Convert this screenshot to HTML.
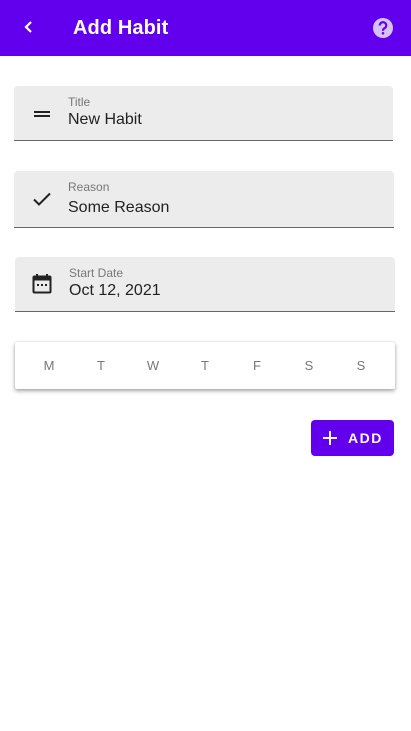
<!DOCTYPE html>
<html><head><style>
body{margin:0;width:411px;height:731px;background:#fff;font-family:"Liberation Sans",sans-serif;position:relative;overflow:hidden}
.hdr{position:absolute;left:0;top:0;width:411px;height:56px;background:#6200ee}
.hdr .t{position:absolute;left:73px;top:17px;color:#fff;font-size:20px;font-weight:bold;letter-spacing:0.1px}
.f{position:absolute;background:#ececec;border-radius:4px 4px 0 0;border-bottom:1px solid #666;height:53px}
.f .l{position:absolute;left:54px;top:9px;font-size:12px;color:#777}
.f .v{position:absolute;left:54px;top:25px;font-size:16px;color:#222}
.f svg{position:absolute;left:16px;top:16px}
.card{position:absolute;left:15px;top:342px;width:380px;height:47px;background:#fff;box-shadow:0 2px 4px rgba(0,0,0,.35),0 0 2px rgba(0,0,0,.12);border-radius:2px}
.card span{position:absolute;top:16px;font-size:13px;color:#777;width:20px;text-align:center}
.btn{position:absolute;left:311px;top:420px;width:83px;height:36px;background:#6200ee;border-radius:4px;color:#fff}
.btn span{position:absolute;left:37px;top:10px;font-size:14px;font-weight:bold;letter-spacing:1.5px}
</style></head><body>
<div class="hdr">
<svg style="position:absolute;left:20px;top:19px" width="16" height="16" viewBox="0 0 16 16"><path d="M11 3L6 8l5 5" stroke="#fff" stroke-width="2.2" fill="none"/></svg>
<div class="t">Add Habit</div>
<svg style="position:absolute;left:372px;top:17px" width="22" height="22" viewBox="0 0 22 22"><circle cx="11" cy="11" r="10" fill="#d6c2f7"/><path d="M7.8 8.5a3.2 3.2 0 1 1 4.6 2.8c-1 .6-1.4 1.1-1.4 2.4" stroke="#6200ee" stroke-width="2.2" fill="none"/><circle cx="11" cy="16.3" r="1.3" fill="#6200ee"/></svg>
</div>
<div class="f" style="left:14px;top:86px;width:379px;height:54px">
<svg width="24" height="24" viewBox="0 0 24 24"><path d="M4 9h16v2H4zM4 13h16v2H4z" fill="#222"/></svg>
<div class="l">Title</div><div class="v">New Habit</div></div>
<div class="f" style="left:14px;top:171px;width:380px;height:56px">
<svg width="24" height="24" viewBox="0 0 24 24" style="top:16px"><path d="M4 12.5l5 5L20 6.5" stroke="#222" stroke-width="2" fill="none"/></svg>
<div class="l" style="top:9px">Reason</div><div class="v" style="top:28px">Some Reason</div></div>
<div class="f" style="left:15px;top:257px;width:380px;height:54px">
<svg width="24" height="24" viewBox="0 0 24 24" style="left:15px;top:15px"><path d="M7 2v3M17 2v3" stroke="#222" stroke-width="2"/><rect x="3.5" y="4.5" width="17" height="16" rx="1" fill="none" stroke="#222" stroke-width="2"/><rect x="3.5" y="4.5" width="17" height="4" fill="#222"/><rect x="7" y="12" width="2" height="2" fill="#222"/><rect x="11" y="12" width="2" height="2" fill="#222"/><rect x="15" y="12" width="2" height="2" fill="#222"/></svg>
<div class="l">Start Date</div><div class="v">Oct 12, 2021</div></div>
<div class="card">
<span style="left:24px">M</span><span style="left:76px">T</span><span style="left:128px">W</span><span style="left:180px">T</span><span style="left:232px">F</span><span style="left:284px">S</span><span style="left:336px">S</span>
</div>
<div class="btn">
<svg style="position:absolute;left:11px;top:10px" width="16" height="16" viewBox="0 0 16 16"><path d="M8 1v14M1 8h14" stroke="#fff" stroke-width="2"/></svg>
<span>ADD</span></div>
</body></html>
